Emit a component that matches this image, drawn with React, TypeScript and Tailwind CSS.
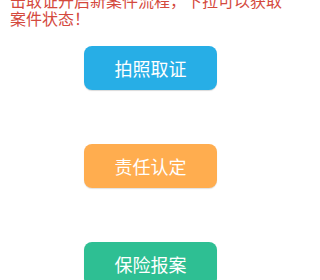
import React from "react";

const font = { fontFamily: '"Noto Sans CJK SC", "Noto Sans", sans-serif' };

export default function App() {
  return (
    <div className="w-[301px] h-[280px] overflow-hidden bg-white" style={font}>
      <div className="-mt-[9px] px-[10px] text-[16px] leading-[18px] text-[#d4493d]">
        击取证开启新案件流程，下拉可以获取
        <br />
        案件状态！
      </div>
      <div className="mt-[19px] flex flex-col items-center gap-[54px]">
        <button className="h-[44px] w-[133px] rounded-[8px] bg-[#27aee6] text-[18px] text-white shadow-[0_1px_1px_rgba(0,0,0,0.15)]">
          拍照取证
        </button>
        <button className="h-[44px] w-[133px] rounded-[8px] bg-[#ffad4f] text-[18px] text-white shadow-[0_1px_1px_rgba(0,0,0,0.12)]">
          责任认定
        </button>
        <button className="h-[44px] w-[133px] rounded-[8px] bg-[#2ebf93] text-[18px] text-white shadow-[0_1px_1px_rgba(0,0,0,0.15)]">
          保险报案
        </button>
      </div>
    </div>
  );
}
